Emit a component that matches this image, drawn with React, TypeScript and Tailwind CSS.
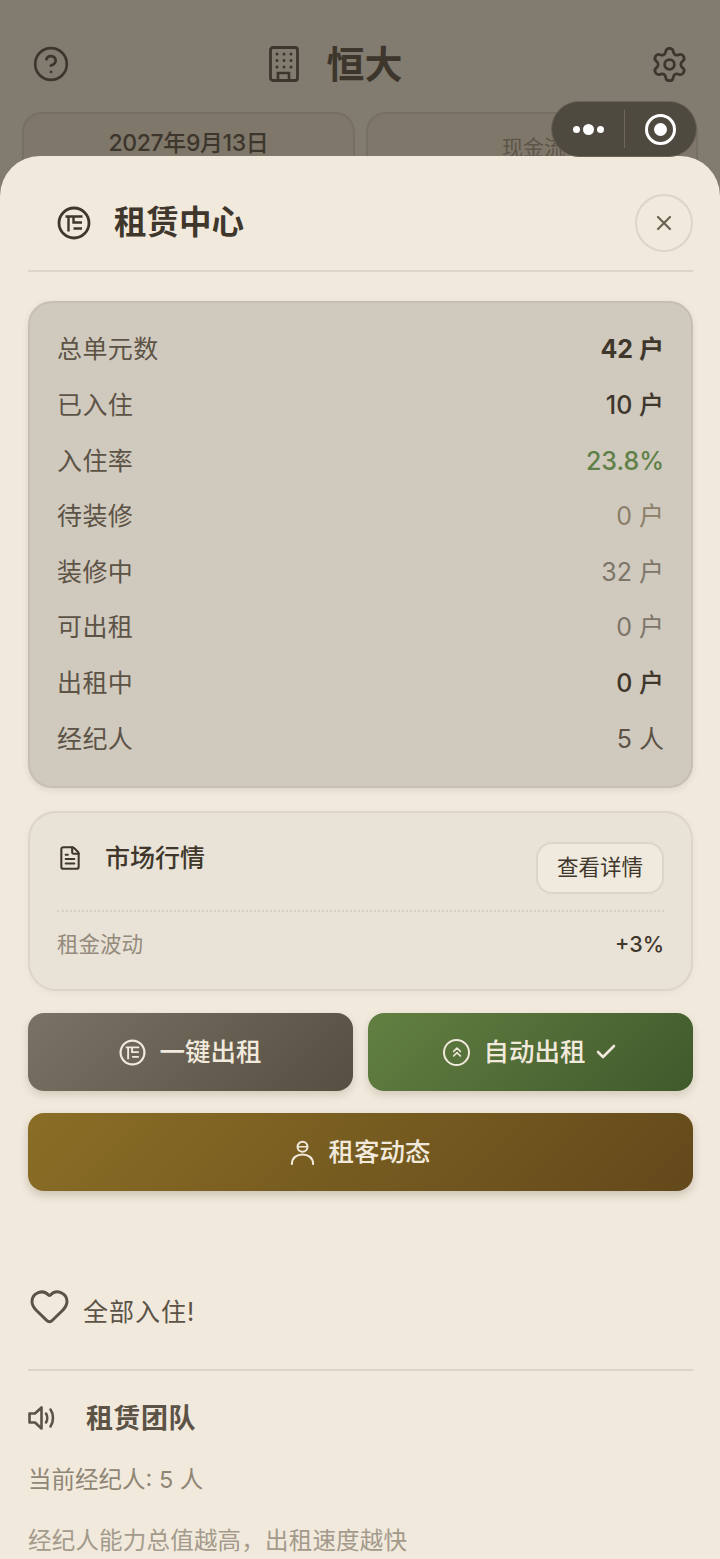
import { ChevronsUp, CircleHelp, FileText, Heart, Settings, X, Check } from "lucide-react";

const FONT = "font-['Inter','Noto_Sans_CJK_SC',sans-serif]";

const stats = [
  { label: "总单元数", value: "42 户", cls: "text-[#3f372c] font-bold" },
  { label: "已入住", value: "10 户", cls: "text-[#3f372c] font-medium" },
  { label: "入住率", value: "23.8%", cls: "text-[#5f8048] font-medium" },
  { label: "待装修", value: "0 户", cls: "text-[#8b7f69]" },
  { label: "装修中", value: "32 户", cls: "text-[#7d7568]" },
  { label: "可出租", value: "0 户", cls: "text-[#7d7568]" },
  { label: "出租中", value: "0 户", cls: "text-[#3f372c] font-medium" },
  { label: "经纪人", value: "5 人", cls: "text-[#5c5346]" },
];

function RentIcon({ className }: { className?: string }) {
  return (
    <svg viewBox="0 0 34 34" fill="none" stroke="currentColor" strokeWidth="2.8" className={className}>
      <circle cx="17" cy="17" r="15" />
      <path d="M8.5 10.5H25.5M11.5 10.5V25.5M16.5 10.5V16.5H25M16.5 22.5H25" strokeWidth="2.4" />
    </svg>
  );
}

function BuildingIcon({ className }: { className?: string }) {
  return (
    <svg viewBox="0 0 30 36" fill="none" stroke="currentColor" strokeLinecap="round" className={className}>
      <rect x="1.5" y="1.5" width="27" height="33" rx="2.5" strokeWidth="2.8" />
      <path d="M9 34v-7h11v7" strokeWidth="2.6" />
      <path d="M8 8h.01M15 8h.01M22 8h.01M8 14.5h.01M15 14.5h.01M22 14.5h.01M8 21h.01M15 21h.01M22 21h.01" strokeWidth="3" />
    </svg>
  );
}

function SpeakerIcon({ className }: { className?: string }) {
  return (
    <svg viewBox="0 0 28 28" fill="none" stroke="currentColor" strokeWidth="2.6" strokeLinejoin="round" strokeLinecap="round" className={className}>
      <path d="M13.5 3.5V24.5L7 18.5H1.5V9.5H7Z" />
      <path d="M18 9.5C19.6 12 19.6 16 18 18.5" />
      <path d="M22.5 5.5C25.8 10 25.8 18 22.5 22.5" />
    </svg>
  );
}

function TenantIcon({ className }: { className?: string }) {
  return (
    <svg viewBox="0 0 26 26" fill="none" stroke="currentColor" strokeWidth="2.1" strokeLinecap="round" className={className}>
      <circle cx="13" cy="7" r="5.2" />
      <path d="M8.5 7H17.5" strokeWidth="1.6" />
      <path d="M2 25C2 18.5 7 15 13 15C19 15 24 18.5 24 25" />
    </svg>
  );
}

export default function App() {
  return (
    <div className={`relative h-[1559px] w-[720px] overflow-hidden bg-[#827b6f] ${FONT}`}>
      {/* dimmed page behind the sheet */}
      <div className="flex h-[112px] items-center justify-between pl-[32px] pr-[31px] pt-[16px] text-[#3d362c]">
        <CircleHelp className="h-[38px] w-[38px]" strokeWidth={1.7} />
        <div className="mr-[48px] flex items-center gap-[27px]">
          <BuildingIcon className="h-[36px] w-[30px]" />
          <span className="text-[38px] font-bold leading-none">恒大</span>
        </div>
        <Settings className="h-[39px] w-[39px]" strokeWidth={1.7} />
      </div>
      <div className="flex gap-[11px] px-[22px]">
        <div className="flex h-[80px] w-[333px] justify-center rounded-[20px] border-2 border-[#786f63] bg-[#7f7769] pt-[18px] text-[23px] font-medium leading-none tracking-[-0.4px] text-[#3d362c]">
          2027年9月13日
        </div>
        <div className="h-[80px] w-[332px] rounded-[20px] border-2 border-[#786f63] bg-[#7f7769] pl-[134px] pt-[23px] text-[21px] leading-none text-[#5c5548]">
          现金流
        </div>
      </div>

      {/* rental sheet */}
      <div className="absolute inset-x-0 bottom-0 top-[156px] rounded-t-[40px] bg-[#f1e9dc] pl-[28px] pr-[27px]">
        <div className="flex h-[116px] items-center justify-between border-b-2 border-[#dcd5c8] pl-[29px] pt-[20px]">
          <div className="flex items-center gap-[23px] text-[#3f372c]">
            <RentIcon className="h-[34px] w-[34px]" />
            <span className="text-[32.5px] font-semibold leading-none">租赁中心</span>
          </div>
          <div className="flex h-[58px] w-[58px] items-center justify-center rounded-full border-2 border-[#dcd5c8] text-[#6b6255]">
            <X className="h-[24px] w-[24px]" strokeWidth={2.2} />
          </div>
        </div>

        <div className="mt-[29px] flex h-[487px] flex-col justify-center rounded-[24px] border-2 border-[#c6bfb2] bg-[#d0c9bd] px-[27px] shadow-[0_2px_6px_rgba(90,80,60,0.12)]">
          {stats.map((s) => (
            <div key={s.label} className="flex h-[55.6px] items-center justify-between text-[25px] leading-none">
              <span className="tracking-[0.4px] text-[#5c5346]">{s.label}</span>
              <span className={s.cls}>{s.value}</span>
            </div>
          ))}
        </div>

        <div className="mt-[23px] h-[180px] rounded-[28px] border-2 border-[#dcd5c8] bg-[#e9e2d6] px-[27px] shadow-[0_2px_6px_rgba(90,80,60,0.06)]">
          <div className="flex h-[99px] items-start justify-between border-b-2 border-dotted border-[#d5cec1] pt-[29px]">
            <div className="flex items-center gap-[22px] pt-[3px] text-[#3f372c]">
              <FileText className="h-[26px] w-[26px]" strokeWidth={1.9} />
              <span className="text-[25px] font-medium leading-none">市场行情</span>
            </div>
            <div className="flex h-[52px] w-[128px] items-center justify-center rounded-[16px] border-2 border-[#dcd5c8] bg-[#f0e9dd] text-[21.5px] leading-none text-[#3f372c]">
              查看详情
            </div>
          </div>
          <div className="flex h-[66px] items-center justify-between">
            <span className="text-[21.5px] leading-none text-[#948b7d]">租金波动</span>
            <span className="text-[21.5px] font-medium leading-none text-[#3f372c]">+3%</span>
          </div>
        </div>

        <div className="mt-[22px] flex gap-[15px]">
          <div className="flex h-[78px] flex-1 items-center justify-center gap-[13px] rounded-[16px] bg-[linear-gradient(135deg,#7a7265,#574e42)] text-[#f1e9dc] shadow-[0_4px_8px_rgba(90,80,60,0.2)]">
            <RentIcon className="h-[27px] w-[27px]" />
            <span className="text-[25.5px] font-medium leading-none">一键出租</span>
          </div>
          <div className="flex h-[78px] flex-1 items-center justify-center rounded-[16px] bg-[linear-gradient(135deg,#638042,#40592c)] text-[#f1e9dc] shadow-[0_4px_8px_rgba(90,80,60,0.2)]">
            <span className="flex h-[27px] w-[27px] items-center justify-center rounded-full border-2 border-[#f1e9dc]">
              <ChevronsUp className="h-[16px] w-[16px]" strokeWidth={2.4} />
            </span>
            <span className="ml-[13px] text-[25.5px] font-medium leading-none">自动出租</span>
            <Check className="ml-[8px] h-[24px] w-[24px]" strokeWidth={2.6} />
          </div>
        </div>

        <div className="mt-[22px] flex h-[78px] items-center justify-center gap-[13px] rounded-[16px] bg-[linear-gradient(135deg,#8a6e26,#63491b)] text-[#f1e9dc] shadow-[0_4px_8px_rgba(90,80,60,0.25)]">
          <TenantIcon className="h-[25px] w-[25px]" />
          <span className="text-[25.5px] font-medium leading-none">租客动态</span>
        </div>

        <div className="mt-[96px] flex items-start gap-[12px] text-[#5c5346]">
          <Heart className="-mt-[2px] h-[42px] w-[43px]" strokeWidth={1.7} />
          <span className="mt-[13px] text-[25px] leading-none tracking-[1px]">全部入住!</span>
        </div>

        <div className="mt-[42px] border-t-2 border-[#dcd5c8] pt-[33px]">
          <div className="flex items-center gap-[30px] text-[#5c5346]">
            <SpeakerIcon className="h-[28px] w-[28px]" />
            <span className="text-[27px] font-semibold leading-none tracking-[0.5px]">租赁团队</span>
          </div>
          <p className="mt-[36px] text-[23.5px] leading-none text-[#8f8676]">当前经纪人: 5 人</p>
          <p className="mt-[37px] whitespace-nowrap text-[23.5px] leading-none tracking-[0.2px] text-[#a39a8b]">经纪人能力总值越高，出租速度越快</p>
        </div>
      </div>

      {/* mini program capsule */}
      <div className="absolute left-[551px] top-[101px] flex h-[56px] w-[146px] items-center rounded-full border border-[#6a6357] bg-[#4f4a40]">
        <div className="flex w-[72px] items-center justify-center gap-[3px]">
          <span className="h-[7px] w-[7px] rounded-full bg-white" />
          <span className="h-[11px] w-[11px] rounded-full bg-white" />
          <span className="h-[7px] w-[7px] rounded-full bg-white" />
        </div>
        <div className="h-[38px] w-px bg-[#6e685c]" />
        <div className="flex flex-1 items-center justify-center">
          <span className="flex h-[31px] w-[31px] items-center justify-center rounded-full border-[3px] border-white">
            <span className="h-[13px] w-[13px] rounded-full bg-white" />
          </span>
        </div>
      </div>
    </div>
  );
}
